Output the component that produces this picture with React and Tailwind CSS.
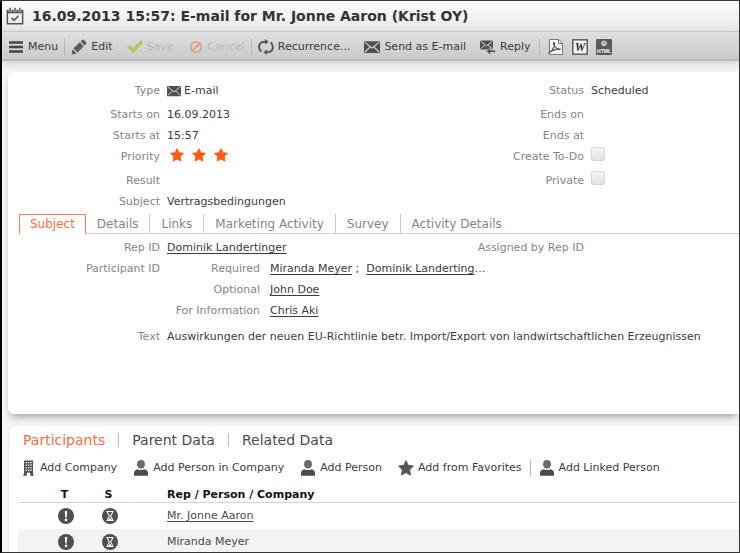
import React, { useState } from 'react';
import clsx from 'clsx';

const Svg = ({ children, size = 16 }) => (
  <svg width={size} height={size} viewBox="0 0 16 16" className="shrink-0" aria-hidden="true">{children}</svg>
);

const CalendarIcon = () => (
  <Svg size={18}>
    <path d="M1.2 3.2h13.6v11.6H1.2z" fill="none" stroke="#555" strokeWidth="1.3" />
    <path d="M1 3h14v2.6H1z" fill="#555" />
    <path d="M3.6 1v3M8 1v3M12.4 1v3" stroke="#f6f6f6" strokeWidth="2.6" />
    <path d="M3.6.6v3.2M8 .6v3.2M12.4.6v3.2" stroke="#555" strokeWidth="1.3" />
    <path d="M5 9.6l2.2 2.2L11 7.8" fill="none" stroke="#555" strokeWidth="1.5" />
  </Svg>
);

const MenuIcon = () => (
  <Svg>
    <path d="M1 3.5h14M1 8h14M1 12.5h14" stroke="#454545" strokeWidth="2.4" />
  </Svg>
);

const PencilIcon = () => (
  <Svg>
    <path d="M.5 15.5l1-5 4 4z" fill="#555" />
    <path d="M2.3 9.6l6.4-6.3 4 4-6.3 6.4z" fill="#5c5c5c" />
    <path d="M9.6 2.4l1.7-1.6q.7-.6 1.4 0l2.5 2.5q.6.7 0 1.4l-1.6 1.7z" fill="#5c5c5c" />
  </Svg>
);

const CheckIcon = () => (
  <Svg>
    <path d="M.3 8.8L3 6.2l3 3.1L14 1.6l2 1.6L6.4 14z" fill="#a9cb52" />
  </Svg>
);

const CancelIcon = () => (
  <Svg>
    <circle cx="8" cy="8" r="5.3" fill="none" stroke="#e09a7c" strokeWidth="1.6" />
    <path d="M4.6 11.4l6.8-6.8" stroke="#e09a7c" strokeWidth="1.6" />
  </Svg>
);

const RecurrenceIcon = () => (
  <Svg>
    <path d="M3.4 12.6C.2 9.6.2 4.8 4.4 3.1 5.4 2.7 6.2 2.7 7.5 2.7" fill="none" stroke="#555" strokeWidth="1.9" />
    <path d="M12.6 3.4c3.2 3 3.2 7.8-1 9.5-1 .4-1.800.4-3.100.4" fill="none" stroke="#555" strokeWidth="1.9" />
    <path d="M7 0l3.600 2.700L7 5.400zM9 10.600l-3.600 2.700L9 16z" fill="#555" />
  </Svg>
);

const MailIcon = ({ size }) => (
  <Svg size={size}>
    <rect x="0" y="2.2" width="16" height="11.8" rx="1" fill="#4f4f4f" />
    <path d="M1 3.3l7 5.8 7-5.8M1 13l4.900-4.900M15 13l-4.900-4.900" fill="none" stroke="#e2e2e2" strokeWidth="1.1" />
  </Svg>
);

const ReplyIcon = () => (
  <Svg>
    <rect x="0" y="1.5" width="13" height="9" rx="1" fill="#4f4f4f" />
    <path d="M.8 2.3l5.7 4.6 5.7-4.6M.8 9.800l4-4M12.200 9.800l-4-4" fill="none" stroke="#dedede" strokeWidth="1" />
    <path d="M6.4 12.2l4.200-4v2.900h5v2.300h-5v2.800z" fill="#4f4f4f" stroke="#d6d6d6" strokeWidth=".7" />
  </Svg>
);

const PdfIcon = () => (
  <Svg>
    <path d="M1.5.5h9.300l3.700 3.700v11.300h-13z" fill="#f5f5f5" stroke="#777" />
    <path d="M10.5.5v4h4" fill="none" stroke="#777" />
    <path d="M.5 14.400C4 12 6.800 7.800 6.600 4.300c-.1-1-1.300-.9-1.200.1.300 3 3.200 5.600 7 6M.8 14C4 11.400 8 10 12.600 10.200" fill="none" stroke="#555" strokeWidth="1.2" />
  </Svg>
);

const WordIcon = () => (
  <Svg>
    <rect x=".8" y=".8" width="14.4" height="14.4" fill="#f2f2f2" stroke="#5e5e5e" strokeWidth="1.5" />
    <text x="8" y="12.3" textAnchor="middle" fontFamily="Liberation Serif, serif" fontSize="12" fontWeight="bold" fontStyle="italic" fill="#333">W</text>
  </Svg>
);

const HtmlIcon = () => (
  <Svg>
    <rect x="0" y="0" width="16" height="16" rx="1" fill="#5a5a5a" />
    <circle cx="8" cy="4.2" r="2.8" fill="#ccc" />
    <path d="M6.3 3.4l3 2.200M7.400 2l2 1.600" stroke="#666" strokeWidth=".7" />
    <text x="8" y="13.5" textAnchor="middle" fontFamily="Liberation Sans, sans-serif" fontSize="5" fontWeight="bold" fill="#fff">HTML</text>
  </Svg>
);

const CompanyIcon = () => (
  <Svg>
    <path d="M4 .5h9v15h-2.800v-2.800H6.800v2.800H4z" fill="#505050" />
    <path d="M5.5 2.600h6.300M5.500 5.200h6.300M5.500 7.800h6.300M5.500 10.400h6.300" stroke="#fff" strokeWidth="1.3" strokeDasharray="1.4 1" />
    <path d="M3 15h3.800M10.200 15H14" stroke="#505050" strokeWidth="1.2" />
  </Svg>
);

const PersonIcon = () => (
  <Svg>
    <ellipse cx="8" cy="4.3" rx="3.9" ry="4.2" fill="#6a6a6a" />
    <path d="M1 15.800v-2.500Q1 10 4.500 9.200 8 11 11.500 9.200 15 10 15 13.300v2.500z" fill="#4c4c4c" />
  </Svg>
);

const StarIcon = ({ fill = '#555', size }) => (
  <Svg size={size}>
    <path d="M8 .8l2.200 4.600 5.200.7-3.800 3.600.9 5.300L8 12.500 3.500 15l.9-5.300L.6 6.100l5.200-.7z" fill={fill} stroke={fill} strokeWidth="1" strokeLinejoin="round" />
  </Svg>
);

const AlertIcon = () => (
  <Svg>
    <circle cx="8" cy="8" r="8" fill="#505050" />
    <path d="M6.800 3h2.400l-.5 6.400H7.300z" fill="#fff" />
    <circle cx="8" cy="11.9" r="1.3" fill="#fff" />
  </Svg>
);

const HourglassIcon = () => (
  <Svg>
    <circle cx="8" cy="8" r="8" fill="#505050" />
    <path d="M4.5 3.500h7M4.500 12.500h7M5.500 3.500c0 3 1.800 3.200 1.800 4.500s-1.800 1.500-1.800 4.500M10.500 3.500c0 3-1.800 3.200-1.800 4.500s1.800 1.500 1.800 4.500" fill="none" stroke="#fff" strokeWidth="1.1" />
    <path d="M6.300 12L8 9.600 9.700 12z" fill="#fff" />
  </Svg>
);

const Divider = () => <span className="h-4 w-px bg-[#b4b4b4]" />;

const ToolButton = ({ icon, children, disabled }) => (
  <button
    type="button"
    disabled={disabled}
    className={clsx('flex shrink-0 items-center gap-1 whitespace-nowrap', disabled ? 'text-[#b9b9b9]' : 'text-[#3c3c3c]')}
  >
    {icon}
    {children}
  </button>
);

const Row = ({ label, children, tall, htmlFor }) => (
  <div className={clsx('flex gap-[7px] leading-[21px]', tall ? 'h-6' : 'min-h-[21px]')}>
    <label htmlFor={htmlFor} className="w-38 shrink-0 text-right text-[#858585]">{label}</label>
    <div className="min-w-0 whitespace-nowrap text-[#3c3c3c]">{children}</div>
  </div>
);

const SubRow = ({ label, children }) => (
  <div className="flex gap-[10px]">
    <span className="w-[93px] text-right text-[#858585]">{label}</span>
    <span>{children}</span>
  </div>
);

const PersonLink = ({ children }) => (
  <a href="#" className="underline underline-offset-2">{children}</a>
);

const CheckBox = ({ id }) => (
  <input
    id={id}
    type="checkbox"
    className="mt-px block size-[14px] appearance-none rounded-[3px] border border-[#d2d2d2] bg-linear-to-b from-[#f8f8f8] to-[#e0e0e0] checked:to-[#ff6a3c]"
  />
);

const detailTabs = ['Subject', 'Details', 'Links', 'Marketing Activity', 'Survey', 'Activity Details'];
const sectionTabs = ['Participants', 'Parent Data', 'Related Data'];

const App = () => {
  const [detailTab, setDetailTab]   = useState('Subject');
  const [sectionTab, setSectionTab] = useState('Participants');

  return (
    <div className="flex h-screen flex-col overflow-hidden border border-l-2 border-[#333] border-l-black bg-[#f5f5f5] font-['Verdana','DejaVu_Sans',sans-serif] text-[11px]">
      <header className="flex h-[30px] shrink-0 items-center gap-2 bg-linear-to-b from-white to-[#e6e6e6] pl-1">
        <CalendarIcon />
        <h1 className="whitespace-nowrap text-[14px] font-bold text-[#333]">16.09.2013 15:57: E-mail for Mr. Jonne Aaron (Krist OY)</h1>
      </header>

      <nav className="flex h-[30px] shrink-0 items-center gap-[14px] border-t border-b-2 border-t-[#c8c8c8] border-b-[#b9b9b9] bg-linear-to-b from-[#dfdfdf] to-[#cacaca] pt-[3px] pl-[6px] shadow-[0_3px_8px_rgba(0,0,0,0.15)]">
        <div className="flex items-center gap-[6px]">
          <ToolButton icon={<MenuIcon />}>Menu</ToolButton>
          <Divider />
          <ToolButton icon={<PencilIcon />}>Edit</ToolButton>
        </div>
        <ToolButton icon={<CheckIcon />} disabled>Save</ToolButton>
        <div className="flex items-center gap-[6px]">
          <ToolButton icon={<CancelIcon />} disabled>Cancel</ToolButton>
          <Divider />
          <ToolButton icon={<RecurrenceIcon />}>Recurrence...</ToolButton>
        </div>
        <ToolButton icon={<MailIcon />}>Send as E-mail</ToolButton>
        <div className="flex items-center gap-2">
          <ToolButton icon={<ReplyIcon />}>Reply</ToolButton>
          <Divider />
          <button type="button" aria-label="PDF"><PdfIcon /></button>
          <button type="button" aria-label="Word"><WordIcon /></button>
          <button type="button" aria-label="HTML"><HtmlIcon /></button>
        </div>
      </nav>

      <main className="flex min-h-0 flex-1 flex-col gap-[11px] pt-[11px] pl-[6px]">
        <section className="flex min-h-[342px] shrink-0 flex-col rounded-l-md bg-white pt-2 shadow-[0_5px_8px_-3px_rgba(0,0,0,0.4)]">
          <div className="grid grid-cols-[58%_42%]">
            <div>
              <Row label="Type" tall>
                <span className="flex items-center gap-[3px]"><MailIcon size={14} />E-mail</span>
              </Row>
              <Row label="Starts on">16.09.2013</Row>
              <Row label="Starts at">15:57</Row>
              <Row label="Priority" tall>
                <span className="flex h-[18px] items-center gap-2 pl-[3px]">
                  {[1, 2, 3].map((n) => <StarIcon key={n} size={14} fill="#ff5a14" />)}
                </span>
              </Row>
              <Row label="Result" />
              <Row label="Subject">Vertragsbedingungen</Row>
            </div>
            <div>
              <Row label="Status" tall>Scheduled</Row>
              <Row label="Ends on" />
              <Row label="Ends at" />
              <Row label="Create To-Do" htmlFor="create-todo" tall><CheckBox id="create-todo" /></Row>
              <Row label="Private" htmlFor="private"><CheckBox id="private" /></Row>
            </div>
          </div>

          <div className="mt-[2px] flex h-5 text-xs text-[#858585]" role="tablist">
            <span className="w-[11px]" />
            {detailTabs.map((tab, i) => (
              <button
                key={tab}
                type="button"
                role="tab"
                aria-selected={tab === detailTab}
                onClick={() => setDetailTab(tab)}
                className={clsx(
                  'whitespace-nowrap border-r',
                  tab === detailTab
                    ? 'border-t border-l border-[#ff7a5c] px-[10px] pb-[2px] text-[#ff6a3c]'
                    : 'border-b border-b-[#ccc] px-[11px]',
                  tab !== detailTab && (i === detailTabs.length - 1 ? 'border-r-transparent' : 'border-r-[#ccc]')
                )}
              >
                {tab}
              </button>
            ))}
            <span className="flex-1 border-b border-[#ccc]" />
          </div>

          <div className="mt-[3px]">
            <div className="grid grid-cols-[58%_42%]">
              <Row label="Rep ID"><PersonLink>Dominik Landertinger</PersonLink></Row>
              <Row label="Assigned by Rep ID" />
            </div>
            <Row label="Participant ID">
              <SubRow label="Required">
                <PersonLink>Miranda Meyer</PersonLink> ;&nbsp; <PersonLink>Dominik Landerting</PersonLink>…
              </SubRow>
              <SubRow label="Optional"><PersonLink>John Doe</PersonLink></SubRow>
              <SubRow label="For Information"><PersonLink>Chris Aki</PersonLink></SubRow>
            </Row>
          </div>
          <div className="mt-[5px]">
            <Row label="Text">Auswirkungen der neuen EU-Richtlinie betr. Import/Export von landwirtschaftlichen Erzeugnissen</Row>
          </div>
        </section>

        <section className="flex-1 rounded-tl-md border-t border-l border-[#ececec] bg-white">
          <div className="flex items-center gap-[13px] pt-[5px] pl-[14px] text-[14px] leading-[18px] text-[#4a4a4a]" role="tablist">
            {sectionTabs.map((tab, i) => (
              <React.Fragment key={tab}>
                {i > 0 && <span className="h-[14px] w-px bg-[#bbb]" />}
                <button
                  type="button"
                  role="tab"
                  aria-selected={tab === sectionTab}
                  onClick={() => setSectionTab(tab)}
                  className={tab === sectionTab ? 'text-[#ff6a3c]' : ''}
                >
                  {tab}
                </button>
              </React.Fragment>
            ))}
          </div>

          <div className="mt-[11px] flex items-center gap-4 pl-[11px]">
            <ToolButton icon={<CompanyIcon />}>Add Company</ToolButton>
            <ToolButton icon={<PersonIcon />}>Add Person in Company</ToolButton>
            <ToolButton icon={<PersonIcon />}>Add Person</ToolButton>
            <div className="flex items-center gap-2">
              <ToolButton icon={<StarIcon />}>Add from Favorites</ToolButton>
              <Divider />
              <ToolButton icon={<PersonIcon />}>Add Linked Person</ToolButton>
            </div>
          </div>

          <div className="pl-[9px]">
            <table className="mt-2 w-full table-fixed border-separate border-spacing-0 text-[#4a4a4a]">
              <thead>
                <tr className="h-[18px] align-bottom leading-[14px] text-[#111] [&>th]:border-r-2 [&>th]:border-b [&>th]:border-r-white [&>th]:border-b-[#d4d4d4] [&>th]:p-0">
                  <th className="w-[69px]"><span className="pl-[26px]">T</span></th>
                  <th className="w-[45px]">S</th>
                  <th className="w-[29px]" />
                  <th className="text-left"><span className="pl-[6px]">Rep / Person / Company</span></th>
                </tr>
              </thead>
              <tbody>
                {['Mr. Jonne Aaron', 'Miranda Meyer'].map((name, i) => (
                  <tr key={name} className={clsx('h-[26px] [&>td]:p-0 [&>td]:pt-px', i % 2 === 1 && 'bg-[#f3f3f3]')}>
                    <td><span className="flex justify-center pl-[26px]"><AlertIcon /></span></td>
                    <td><span className="flex justify-center"><HourglassIcon /></span></td>
                    <td />
                    <td><span className="pl-[6px]">{i === 0 ? <PersonLink>{name}</PersonLink> : name}</span></td>
                  </tr>
                ))}
              </tbody>
            </table>
          </div>
        </section>
      </main>
    </div>
  );
};

export default App;
